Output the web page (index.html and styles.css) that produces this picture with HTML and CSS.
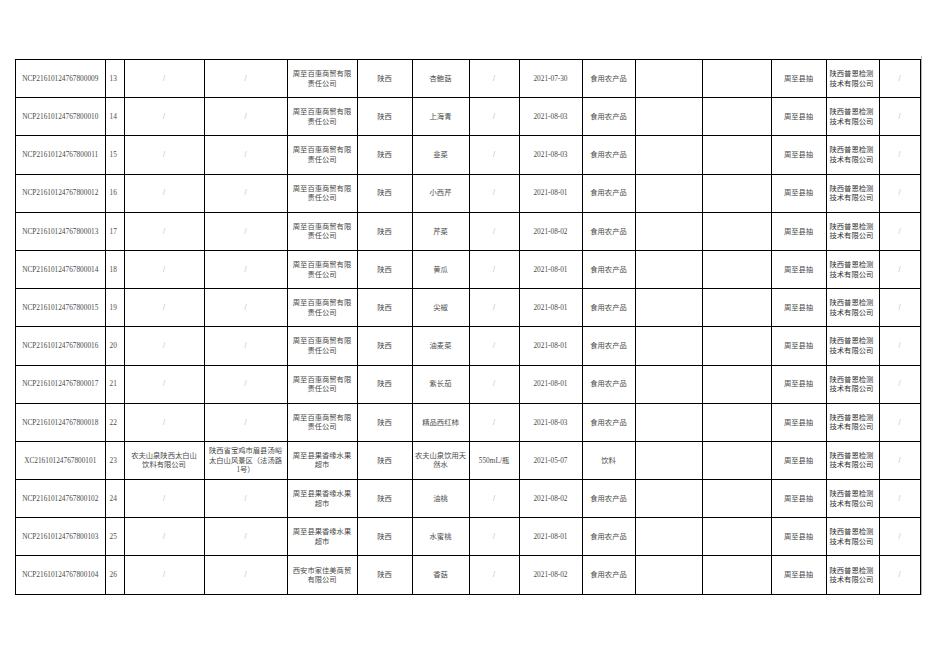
FILE: index.html
```html
<!DOCTYPE html>
<html lang="zh">
<head>
<meta charset="utf-8">
<title>抽检信息</title>
<link rel="stylesheet" href="styles.css">
</head>
<body>
<div class="sheet">
<table class="grid">
<colgroup>
<col class="c1"><col class="c2"><col class="c3"><col class="c4"><col class="c5"><col class="c6"><col class="c7"><col class="c8"><col class="c9"><col class="c10"><col class="c11"><col class="c12"><col class="c13"><col class="c14"><col class="c15">
</colgroup>
<tbody>
<tr><td>NCP21610124767800009</td><td class="num">13</td><td class="sl">/</td><td class="sl">/</td><td>周至百惠商贸有限<br>责任公司</td><td>陕西</td><td>杏鲍菇</td><td class="sl">/</td><td>2021-07-30</td><td>食用农产品</td><td></td><td></td><td>周至县抽</td><td class="lab">陕西普恩检测<br>技术有限公司</td><td class="sl">/</td></tr>
<tr><td>NCP21610124767800010</td><td class="num">14</td><td class="sl">/</td><td class="sl">/</td><td>周至百惠商贸有限<br>责任公司</td><td>陕西</td><td>上海青</td><td class="sl">/</td><td>2021-08-03</td><td>食用农产品</td><td></td><td></td><td>周至县抽</td><td class="lab">陕西普恩检测<br>技术有限公司</td><td class="sl">/</td></tr>
<tr><td>NCP21610124767800011</td><td class="num">15</td><td class="sl">/</td><td class="sl">/</td><td>周至百惠商贸有限<br>责任公司</td><td>陕西</td><td>韭菜</td><td class="sl">/</td><td>2021-08-03</td><td>食用农产品</td><td></td><td></td><td>周至县抽</td><td class="lab">陕西普恩检测<br>技术有限公司</td><td class="sl">/</td></tr>
<tr><td>NCP21610124767800012</td><td class="num">16</td><td class="sl">/</td><td class="sl">/</td><td>周至百惠商贸有限<br>责任公司</td><td>陕西</td><td>小西芹</td><td class="sl">/</td><td>2021-08-01</td><td>食用农产品</td><td></td><td></td><td>周至县抽</td><td class="lab">陕西普恩检测<br>技术有限公司</td><td class="sl">/</td></tr>
<tr><td>NCP21610124767800013</td><td class="num">17</td><td class="sl">/</td><td class="sl">/</td><td>周至百惠商贸有限<br>责任公司</td><td>陕西</td><td>芹菜</td><td class="sl">/</td><td>2021-08-02</td><td>食用农产品</td><td></td><td></td><td>周至县抽</td><td class="lab">陕西普恩检测<br>技术有限公司</td><td class="sl">/</td></tr>
<tr><td>NCP21610124767800014</td><td class="num">18</td><td class="sl">/</td><td class="sl">/</td><td>周至百惠商贸有限<br>责任公司</td><td>陕西</td><td>黄瓜</td><td class="sl">/</td><td>2021-08-01</td><td>食用农产品</td><td></td><td></td><td>周至县抽</td><td class="lab">陕西普恩检测<br>技术有限公司</td><td class="sl">/</td></tr>
<tr><td>NCP21610124767800015</td><td class="num">19</td><td class="sl">/</td><td class="sl">/</td><td>周至百惠商贸有限<br>责任公司</td><td>陕西</td><td>尖椒</td><td class="sl">/</td><td>2021-08-01</td><td>食用农产品</td><td></td><td></td><td>周至县抽</td><td class="lab">陕西普恩检测<br>技术有限公司</td><td class="sl">/</td></tr>
<tr><td>NCP21610124767800016</td><td class="num">20</td><td class="sl">/</td><td class="sl">/</td><td>周至百惠商贸有限<br>责任公司</td><td>陕西</td><td>油麦菜</td><td class="sl">/</td><td>2021-08-01</td><td>食用农产品</td><td></td><td></td><td>周至县抽</td><td class="lab">陕西普恩检测<br>技术有限公司</td><td class="sl">/</td></tr>
<tr><td>NCP21610124767800017</td><td class="num">21</td><td class="sl">/</td><td class="sl">/</td><td>周至百惠商贸有限<br>责任公司</td><td>陕西</td><td>紫长茄</td><td class="sl">/</td><td>2021-08-01</td><td>食用农产品</td><td></td><td></td><td>周至县抽</td><td class="lab">陕西普恩检测<br>技术有限公司</td><td class="sl">/</td></tr>
<tr><td>NCP21610124767800018</td><td class="num">22</td><td class="sl">/</td><td class="sl">/</td><td>周至百惠商贸有限<br>责任公司</td><td>陕西</td><td>精品西红柿</td><td class="sl">/</td><td>2021-08-03</td><td>食用农产品</td><td></td><td></td><td>周至县抽</td><td class="lab">陕西普恩检测<br>技术有限公司</td><td class="sl">/</td></tr>
<tr><td>XC21610124767800101</td><td class="num">23</td><td>农夫山泉陕西太白山<br>饮料有限公司</td><td>陕西省宝鸡市眉县汤峪<br>太白山风景区（法汤路<br>1号）</td><td>周至县果香缘水果<br>超市</td><td>陕西</td><td>农夫山泉饮用天<br>然水</td><td>550mL/瓶</td><td>2021-05-07</td><td>饮料</td><td></td><td></td><td>周至县抽</td><td class="lab">陕西普恩检测<br>技术有限公司</td><td class="sl">/</td></tr>
<tr><td>NCP21610124767800102</td><td class="num">24</td><td class="sl">/</td><td class="sl">/</td><td>周至县果香缘水果<br>超市</td><td>陕西</td><td>油桃</td><td class="sl">/</td><td>2021-08-02</td><td>食用农产品</td><td></td><td></td><td>周至县抽</td><td class="lab">陕西普恩检测<br>技术有限公司</td><td class="sl">/</td></tr>
<tr><td>NCP21610124767800103</td><td class="num">25</td><td class="sl">/</td><td class="sl">/</td><td>周至县果香缘水果<br>超市</td><td>陕西</td><td>水蜜桃</td><td class="sl">/</td><td>2021-08-01</td><td>食用农产品</td><td></td><td></td><td>周至县抽</td><td class="lab">陕西普恩检测<br>技术有限公司</td><td class="sl">/</td></tr>
<tr><td>NCP21610124767800104</td><td class="num">26</td><td class="sl">/</td><td class="sl">/</td><td>西安市家佳美商贸<br>有限公司</td><td>陕西</td><td>香菇</td><td class="sl">/</td><td>2021-08-02</td><td>食用农产品</td><td></td><td></td><td>周至县抽</td><td class="lab">陕西普恩检测<br>技术有限公司</td><td class="sl">/</td></tr>
</tbody>
</table>
<div class="pagebreak"></div>
</div>
</body>
</html>
```

FILE: styles.css
```css
html, body {
  margin: 0;
  padding: 0;
  background: #ffffff;
}

.sheet {
  position: relative;
  padding: 59px 0 0 15px;
  font-family: "Liberation Serif", "Noto Sans CJK SC", serif;
  font-size: 7.3px;
  line-height: 9.5px;
  color: #4a4a4a;
}

.grid {
  border-collapse: collapse;
  table-layout: fixed;
  width: 905px;
}

.grid tr {
  height: 38.2px;
}

.grid td {
  border: 1px solid #000;
  padding: 0 2px;
  text-align: center;
  vertical-align: middle;
  white-space: nowrap;
  overflow: hidden;
}

.grid td.num {
  text-align: left;
  padding-left: 4px;
}

.grid td.sl {
  color: #9a9a9a;
}

.grid td.lab {
  color: #333;
  text-align: left;
  padding-left: 3px;
}

.c1 { width: 89.5px; }
.c2 { width: 19px; }
.c3 { width: 80px; }
.c4 { width: 83px; }
.c5 { width: 70px; }
.c6 { width: 55px; }
.c7 { width: 57px; }
.c8 { width: 50px; }
.c9 { width: 63px; }
.c10 { width: 53px; }
.c11 { width: 67px; }
.c12 { width: 69px; }
.c13 { width: 55px; }
.c14 { width: 53px; }
.c15 { width: 41px; }

.pagebreak {
  position: absolute;
  left: 921px;
  top: 56px;
  width: 1px;
  height: 542px;
  background: #b8b8b8;
}
```
